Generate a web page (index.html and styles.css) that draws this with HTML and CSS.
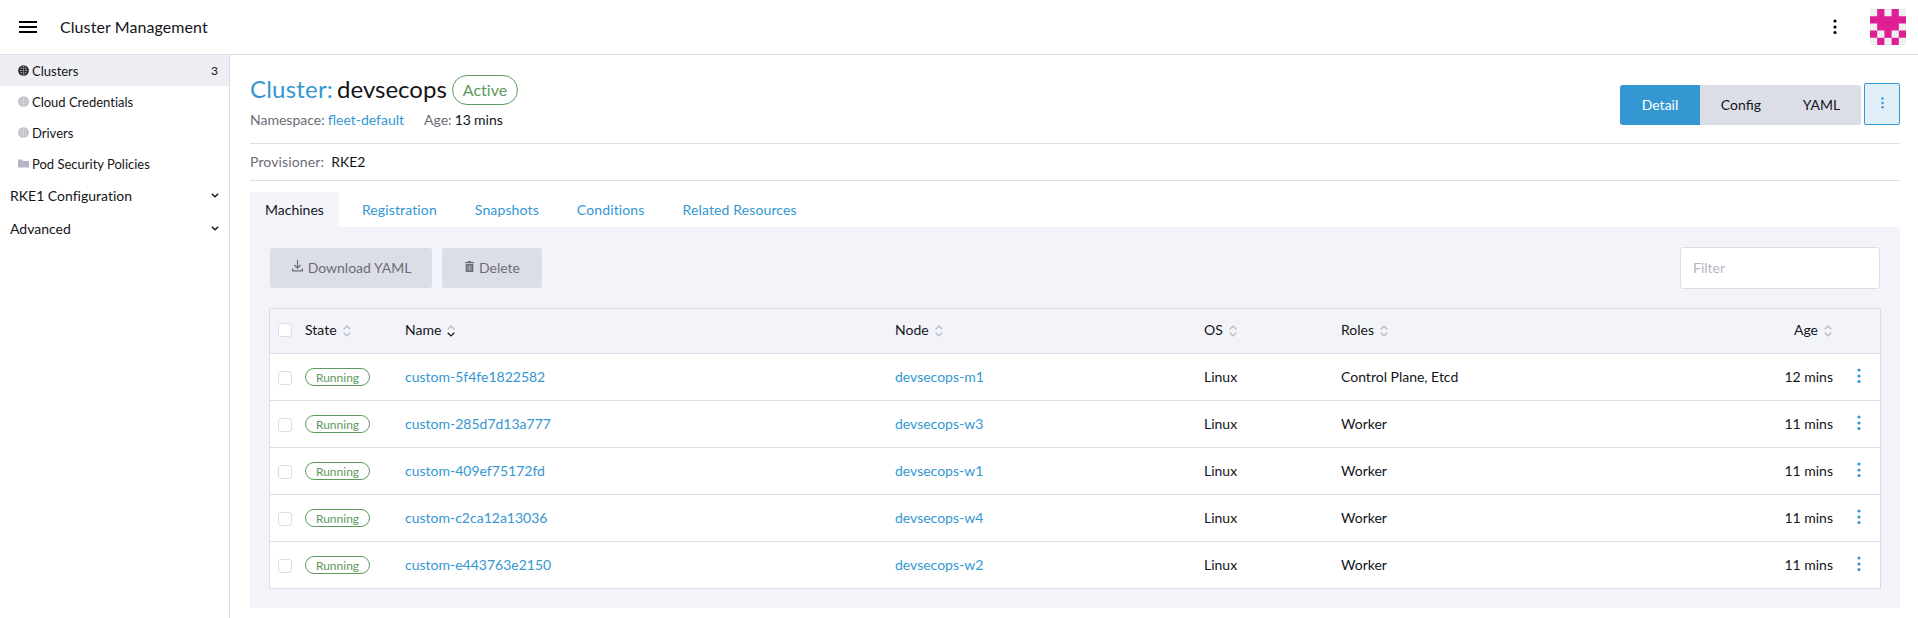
FILE: index.html
```html
<!DOCTYPE html>
<html lang="en">
<head>
<meta charset="utf-8">
<title>Cluster Management</title>
<link rel="stylesheet" href="styles.css">
</head>
<body>
<svg class="defs" width="0" height="0">
  <symbol id="globe" viewBox="0 0 11 11"><circle cx="5.5" cy="5.5" r="5.3" fill="currentColor"/><g fill="none" stroke="#fff" stroke-opacity=".6" stroke-width=".6"><ellipse cx="5.5" cy="5.5" rx="2.6" ry="4.6"/><path d="M5.5 1v9M1 5.5h9M1.8 3.3h7.4M1.8 7.7h7.4"/></g></symbol>
  <symbol id="chev" viewBox="0 0 8 5"><path d="M.8.8 4 3.8 7.2.8" fill="none" stroke="currentColor" stroke-width="1.4"/></symbol>
  <symbol id="sort" viewBox="0 0 8 12"><path class="up" d="M.7 4.2 4 1l3.3 3.2"/><path class="down" d="M.7 7.8 4 11l3.3-3.2"/></symbol>
  <symbol id="dots" viewBox="0 0 4 16"><circle cx="2" cy="2" r="1.6"/><circle cx="2" cy="8" r="1.6"/><circle cx="2" cy="13.5" r="1.6"/></symbol>
</svg>
<header class="top">
  <svg class="burger" width="18" height="12" viewBox="0 0 18 12"><path d="M0 0h18v2H0zM0 5h18v2H0zM0 10h18v2H0z"/></svg>
  <span class="brand">Cluster Management</span>
  <svg class="top-dots" width="4" height="16"><use href="#dots"/></svg>
  <svg class="avatar" width="36" height="36" viewBox="0 0 5 5"><path fill="#f0f0f0" d="M0 0h5v5H0z"/><path fill="#df1f96" d="M1 0h1v1h1V0h1v1h1v1H4v1h1v1H4v1H3V4H2v1H1V4H0V3h1V2H0V1h1z"/><path fill="#f0f0f0" d="M1 3h1v1H1zM3 3h1v1H3z"/></svg>
</header>
<div class="body">
  <nav class="side">
    <a class="item active"><svg class="ico" width="11" height="11"><use href="#globe"/></svg>Clusters<span class="count">3</span></a>
    <a class="item"><svg class="ico" width="11" height="11"><use href="#globe"/></svg>Cloud Credentials</a>
    <a class="item"><svg class="ico" width="11" height="11"><use href="#globe"/></svg>Drivers</a>
    <a class="item"><svg class="ico" width="11" height="11" viewBox="0 0 11 11"><path fill="currentColor" d="M0 1.5h4l1 1.5h6v6.5H0z"/></svg>Pod Security Policies</a>
    <div class="group">RKE1 Configuration<svg width="8" height="5"><use href="#chev"/></svg></div>
    <div class="group">Advanced<svg width="8" height="5"><use href="#chev"/></svg></div>
  </nav>
  <main class="main">
    <section class="masthead">
      <div>
        <h1 class="title"><span class="link kind">Cluster:</span><span class="name">devsecops</span><span class="badge">Active</span></h1>
        <div class="sub"><span class="muted">Namespace: <a class="link">fleet-default</a></span><span class="muted">Age: <b>13 mins</b></span></div>
      </div>
      <div class="actions">
        <div class="switch"><button class="on">Detail</button><button>Config</button><button>YAML</button></div>
        <button class="more"><svg width="3" height="12" viewBox="0 0 4 16"><use href="#dots"/></svg></button>
      </div>
    </section>
    <section class="detail"><span class="muted">Provisioner:</span><span>RKE2</span></section>
    <div class="tabs"><a class="tab current">Machines</a><a class="tab">Registration</a><a class="tab">Snapshots</a><a class="tab">Conditions</a><a class="tab">Related Resources</a></div>
    <section class="panel">
      <div class="tools">
        <button class="btn dl"><svg width="11" height="12" viewBox="0 0 11 12"><path d="M5.5 0v8M2.3 5l3.2 3.2L8.7 5M.6 8.5v2.4h9.8V8.5" fill="none" stroke="currentColor" stroke-width="1.2"/></svg>Download YAML</button>
        <button class="btn del"><svg width="9" height="11" viewBox="0 0 9 11"><path d="M0 1h3V0h3v1h3v1.2H0zM.7 3h7.6v8H.7z" fill="currentColor"/><path d="M3 4.2v5.4M4.5 4.2v5.4M6 4.2v5.4" stroke="#dcdee7" stroke-width=".5"/></svg>Delete</button>
        <input class="filter" placeholder="Filter">
      </div>
      <div class="table">
        <div class="row head"><i class="check"></i><span>State<svg class="sort" width="8" height="12"><use href="#sort"/></svg></span><span>Name<svg class="sort desc" width="8" height="12"><use href="#sort"/></svg></span><span>Node<svg class="sort" width="8" height="12"><use href="#sort"/></svg></span><span>OS<svg class="sort" width="8" height="12"><use href="#sort"/></svg></span><span>Roles<svg class="sort" width="8" height="12"><use href="#sort"/></svg></span><span class="age">Age<svg class="sort" width="8" height="12"><use href="#sort"/></svg></span><span></span></div>
        <div class="row"><i class="check"></i><span class="state">Running</span><a class="link">custom-5f4fe1822582</a><a class="link">devsecops-m1</a><span>Linux</span><span>Control Plane, Etcd</span><span class="age">12 mins</span><svg class="kebab" width="4" height="16"><use href="#dots"/></svg></div>
        <div class="row"><i class="check"></i><span class="state">Running</span><a class="link">custom-285d7d13a777</a><a class="link">devsecops-w3</a><span>Linux</span><span>Worker</span><span class="age">11 mins</span><svg class="kebab" width="4" height="16"><use href="#dots"/></svg></div>
        <div class="row"><i class="check"></i><span class="state">Running</span><a class="link">custom-409ef75172fd</a><a class="link">devsecops-w1</a><span>Linux</span><span>Worker</span><span class="age">11 mins</span><svg class="kebab" width="4" height="16"><use href="#dots"/></svg></div>
        <div class="row"><i class="check"></i><span class="state">Running</span><a class="link">custom-c2ca12a13036</a><a class="link">devsecops-w4</a><span>Linux</span><span>Worker</span><span class="age">11 mins</span><svg class="kebab" width="4" height="16"><use href="#dots"/></svg></div>
        <div class="row"><i class="check"></i><span class="state">Running</span><a class="link">custom-e443763e2150</a><a class="link">devsecops-w2</a><span>Linux</span><span>Worker</span><span class="age">11 mins</span><svg class="kebab" width="4" height="16"><use href="#dots"/></svg></div>
      </div>
    </section>
  </main>
</div>
</body>
</html>
```
FILE: styles.css
```css
* { box-sizing: border-box; }
html { height: 618px; overflow: hidden; }
body { margin: 0; height: 618px; overflow: hidden; background: #fff; color: #141419; font: 14px/20px Lato, sans-serif; }
button, input { font: inherit; color: inherit; border: 0; margin: 0; }
.defs { display: none; }
.link { color: #3497d1; }
.muted { color: #6c6c76; }

.top { display: flex; align-items: center; height: 55px; padding: 0 12px 0 19px; border-bottom: 1px solid #dcdee7; }
.brand { margin-left: 23px; font-size: 16px; letter-spacing: .08px; }
.top-dots { margin-left: auto; margin-right: 33px; }
.avatar { display: block; }

.body { display: flex; height: 563px; }
.side { width: 230px; border-right: 1px solid #dcdee7; }
.item { display: flex; align-items: center; height: 31px; padding: 1px 11px 0 18px; font-size: 13px; font-variant-ligatures: none; }
.ico { margin: -2px 3px 0 0; color: #b6b6c2; }
.active { background: #eeeff4; }
.active .ico { color: #141419; }
.count { margin-left: auto; font-size: 12px; }
.group { display: flex; align-items: center; justify-content: space-between; height: 33px; padding: 0 10px; font-variant-ligatures: none; }
.group svg { margin-top: -1px; }

.main { flex: 1; padding: 0 18px 0 20px; }
.masthead { display: flex; justify-content: space-between; height: 89px; padding-top: 20px; border-bottom: 1px solid #dcdee7; }
.title { display: flex; align-items: center; height: 30px; margin: 0; font-size: 24px; font-weight: 400; line-height: 30px; }
.kind, .name { margin-top: -2px; }
.kind { letter-spacing: .2px; }
.name { margin-left: 4px; margin-right: 5px; }
.badge { height: 30px; padding: 0 10px; border: 1px solid #5d995d; border-radius: 15px; color: #5d995d; font-size: 16px; line-height: 28px; font-variant-ligatures: none; }
.sub { display: flex; gap: 20px; margin-top: 5px; word-spacing: -.5px; }
.sub b { color: #141419; font-weight: 400; }
.actions { display: flex; align-items: flex-end; gap: 3px; height: 42px; margin-top: 8px; }
.switch { display: flex; width: 241px; height: 40px; border-radius: 3px; overflow: hidden; background: #dcdee7; }
.switch button { flex: auto; padding: 0 20px; background: none; }
.switch .on { flex: 0 0 80px; background: #3497d1; color: #fff; }
.more { display: flex; align-items: center; justify-content: center; width: 36px; height: 42px; border: 1px solid #3497d1; border-radius: 2px; background: #e1eff8; fill: #3497d1; }
.more svg { margin-top: -3px; }

.detail { display: flex; gap: 7px; align-items: center; height: 37px; padding-bottom: 1px; border-bottom: 1px solid #dcdee7; }
.detail .muted { letter-spacing: .13px; }
.tabs { display: flex; gap: 8px; margin-top: 11px; font-variant-ligatures: none; }
.tab { height: 35px; padding: 0 15px; color: #3497d1; line-height: 35px; letter-spacing: .13px; }
.current { background: #f3f4f9; color: #141419; letter-spacing: 0; }
.panel { height: 381px; padding: 20px; background: #f3f4f9; }

.tools { display: flex; align-items: center; gap: 10px; height: 42px; }
.btn { display: flex; align-items: center; justify-content: center; height: 40px; padding: 0 0 1px 1px; border-radius: 3px; background: #dcdee7; color: #6c6c76; }
.btn svg { margin: -3px 5px 0 0; }
.dl { width: 162px; }
.del { width: 100px; }
.filter { width: 200px; height: 42px; margin-left: auto; padding: 0 12px 1px; border: 1px solid #dcdee7; border-radius: 3px; background: #fff; }
.filter::placeholder { color: #b6b6c2; opacity: 1; }

.table { margin: 19px -1px 0; border: 1px solid #dcdee7; border-bottom: 0; background: #fff; }
.row { display: grid; grid-template-columns: 27px 100px 490px 309px 137px 260px 1fr 47px; align-items: center; height: 47px; padding-left: 8px; border-bottom: 1px solid #dcdee7; }
.head { height: 45px; padding-bottom: 2px; background: #f3f4f9; }
.age { text-align: right; }
.head .age { padding-right: 1px; }
.check { width: 14px; height: 14px; border: 1px solid #dcdee7; border-radius: 3px; background: #fff; }
.row:not(.head) .check { margin-top: 2px; }
.state { justify-self: start; width: 65px; height: 18px; border: 1px solid #5d995d; border-radius: 9px; color: #5d995d; font-size: 12px; line-height: 18px; text-align: center; }
.kebab { margin: -2px 0 0 24px; fill: #3497d1; }
.sort { margin: 0 0 -2px 6px; fill: none; stroke: #b6b6c2; stroke-width: 1.2; }
.desc { --down: #141419; }
.down { stroke: var(--down, #b6b6c2); }
```
